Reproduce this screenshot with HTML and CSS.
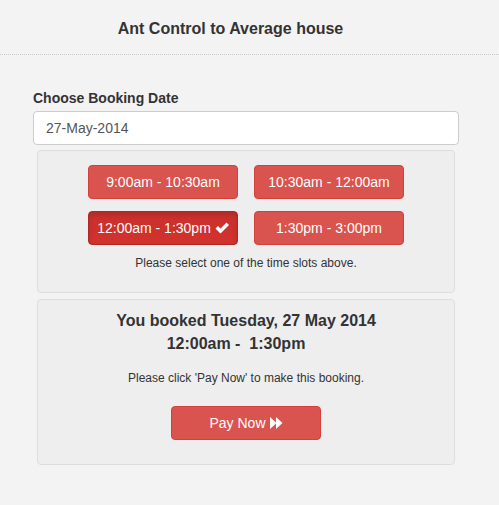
FILE: index.html
```html
<!DOCTYPE html>
<html>
<head>
<meta charset="utf-8">
<link rel="stylesheet" href="styles.css">
</head>
<body>
<div class="header"><h1 class="title">Ant Control to Average house</h1></div>
<div class="content">
  <label class="label">Choose Booking Date</label>
  <div class="input">27-May-2014</div>
  <div class="panel slots-panel">
    <div class="slots">
      <button class="btn">9:00am - 10:30am</button>
      <button class="btn">10:30am - 12:00am</button>
      <button class="btn active">12:00am - 1:30pm <svg class="ico" viewBox="0 0 14 12" width="14" height="12"><path d="M0.5 6.5 L3 4 L5.5 6.5 L11.5 0.5 L14 3 L5.5 11.5 Z" fill="#fff"/></svg></button>
      <button class="btn">1:30pm - 3:00pm</button>
    </div>
    <p class="hint">Please select one of the time slots above.</p>
  </div>
  <div class="panel booked-panel">
    <div class="booked">You booked Tuesday, 27 May 2014</div>
    <div class="booked time">12:00am -&nbsp; 1:30pm</div>
    <p class="hint pay-hint">Please click 'Pay Now' to make this booking.</p>
    <button class="btn pay">Pay Now <svg class="ico" viewBox="0 0 13 12" width="13" height="12"><path d="M0 0 L6.5 6 L0 12 Z M6 0 L12.5 6 L6 12 Z" fill="#fff"/></svg></button>
  </div>
</div>
</body>
</html>
```
FILE: styles.css
```css
html, body {
  margin: 0;
  padding: 0;
  background: #f3f3f3;
  font-family: "Liberation Sans", Arial, sans-serif;
  color: #333;
  font-size: 14px;
}
.header {
  height: 54px;
  border-bottom: 1px dotted #c8c8c8;
  display: flex;
  align-items: center;
  justify-content: center;
  padding-right: 38px;
}
.title {
  margin: 0;
  font-size: 16px;
  font-weight: bold;
  color: #333;
  padding-top: 3px;
}
.content {
  padding: 34px 40px 0 33px;
  display: flex;
  flex-direction: column;
}
.label {
  font-weight: bold;
  font-size: 14px;
  line-height: 18px;
  margin-bottom: 4px;
}
.input {
  height: 34px;
  box-sizing: border-box;
  background: #fff;
  border: 1px solid #ccc;
  border-radius: 4px;
  padding: 7px 12px;
  line-height: 18px;
  font-size: 14px;
  color: #555;
}
.panel {
  margin: 5px 4px 0 4px;
  background: #eee;
  border: 1px solid #ddd;
  border-radius: 4px;
  display: flex;
  flex-direction: column;
  align-items: center;
}
.slots-panel {
  height: 143px;
  box-sizing: border-box;
  padding-top: 14px;
}
.slots {
  display: grid;
  grid-template-columns: 150px 150px;
  column-gap: 16px;
  row-gap: 12px;
}
.btn {
  height: 34px;
  width: 150px;
  box-sizing: border-box;
  background: #d9534f;
  border: 1px solid #d43f3a;
  border-radius: 4px;
  color: #fff;
  font-family: "Liberation Sans", Arial, sans-serif;
  font-size: 14px;
  padding: 0;
  display: flex;
  align-items: center;
  justify-content: center;
  gap: 4px;
}
.btn.active {
  background: linear-gradient(#c9302c, #d2322d);
  border-color: #ac2925;
  box-shadow: inset 0 3px 5px rgba(0,0,0,0.125);
}
.ico {
  display: block;
  margin-top: -1px;
}
.hint {
  margin: 10px 0 0 0;
  font-size: 12px;
  line-height: 16px;
  color: #333;
}
.booked-panel {
  height: 166px;
  box-sizing: border-box;
  margin-top: 6px;
  padding-top: 9px;
}
.booked {
  font-size: 16px;
  font-weight: bold;
  line-height: 23px;
}
.booked.time {
  padding-right: 20px;
}
.pay-hint {
  margin-top: 15px;
}
.btn.pay {
  margin-top: 20px;
}
```
